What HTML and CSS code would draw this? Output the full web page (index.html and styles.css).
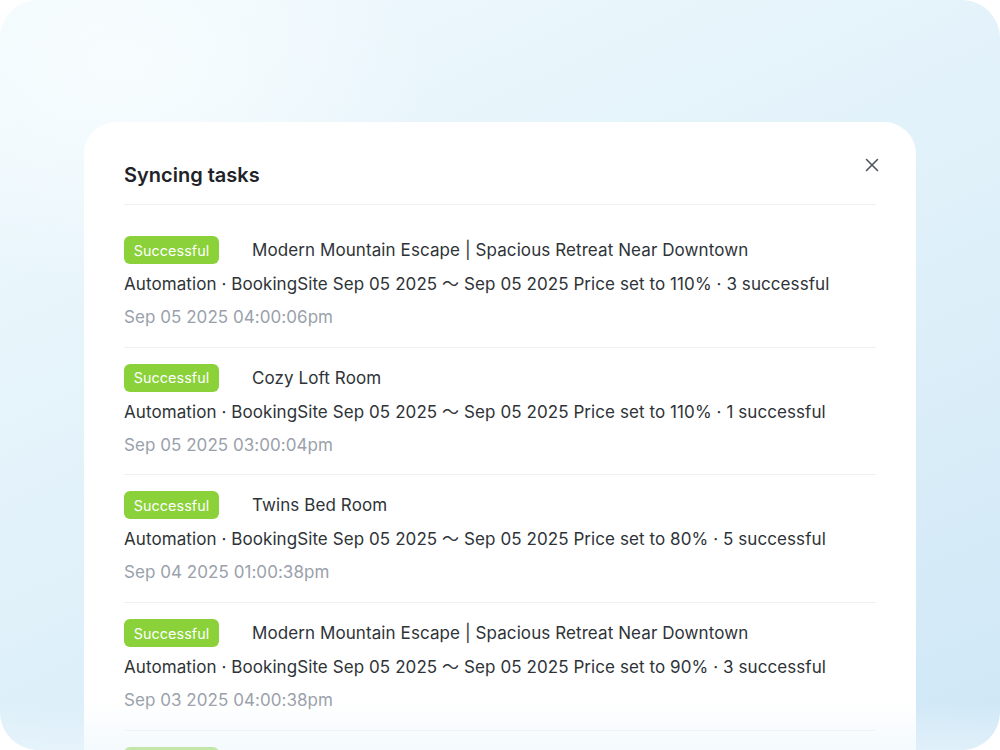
FILE: index.html
```html
<!DOCTYPE html>
<html>
<head>
<meta charset="utf-8">
<link rel="stylesheet" href="styles.css">
</head>
<body>
<div class="frame">
  <div class="card">
    <div class="header">
      <h1 class="title">Syncing tasks</h1>
      <button class="close" aria-label="Close">
        <svg width="14" height="14" viewBox="0 0 14 14"><path d="M1.5 1.5L12.5 12.5M12.5 1.5L1.5 12.5" stroke="#50555c" stroke-width="1.6" stroke-linecap="round"/></svg>
      </button>
    </div>
    <ul class="list">
      <li class="item">
        <div class="row"><span class="badge">Successful</span><span class="name">Modern Mountain Escape | Spacious Retreat Near Downtown</span></div>
        <div class="desc">Automation · BookingSite Sep 05 2025 ～ Sep 05 2025 Price set to 110% · 3 successful</div>
        <div class="time">Sep 05 2025 04:00:06pm</div>
      </li>
      <li class="item">
        <div class="row"><span class="badge">Successful</span><span class="name">Cozy Loft Room</span></div>
        <div class="desc">Automation · BookingSite Sep 05 2025 ～ Sep 05 2025 Price set to 110% · 1 successful</div>
        <div class="time">Sep 05 2025 03:00:04pm</div>
      </li>
      <li class="item">
        <div class="row"><span class="badge">Successful</span><span class="name">Twins Bed Room</span></div>
        <div class="desc">Automation · BookingSite Sep 05 2025 ～ Sep 05 2025 Price set to 80% · 5 successful</div>
        <div class="time">Sep 04 2025 01:00:38pm</div>
      </li>
      <li class="item">
        <div class="row"><span class="badge">Successful</span><span class="name">Modern Mountain Escape | Spacious Retreat Near Downtown</span></div>
        <div class="desc">Automation · BookingSite Sep 05 2025 ～ Sep 05 2025 Price set to 90% · 3 successful</div>
        <div class="time">Sep 03 2025 04:00:38pm</div>
      </li>
      <li class="item">
        <div class="row"><span class="badge"></span></div>
      </li>
    </ul>
  </div>
  <div class="fade"></div>
</div>
</body>
</html>
```
FILE: styles.css
```css
* { box-sizing: border-box; }
html, body { margin: 0; padding: 0; background: #ffffff; }
body {
  font-family: Inter, "Noto Sans", "Noto Sans CJK SC", sans-serif;
  width: 1000px;
  height: 750px;
  overflow: hidden;
}
.frame {
  position: relative;
  width: 1000px;
  height: 750px;
  border-radius: 38px;
  overflow: hidden;
  background:
    radial-gradient(ellipse 420px 300px at 12% 8%, rgba(248,253,255,0.95), rgba(248,253,255,0) 75%),
    linear-gradient(155deg, #f0f9fd 0%, #e2f2fa 45%, #cfe7f6 100%);
  padding-top: 122px;
}
.card {
  margin: 0 84px;
  background: #ffffff;
  border-radius: 32px;
  padding: 40px 40px 0;
  height: 700px;
}
.header {
  display: flex;
  align-items: center;
  justify-content: space-between;
  padding-bottom: 16px;
  border-bottom: 1px solid #eef1f4;
}
.title {
  margin: 0;
  font-size: 20px;
  line-height: 26px;
  font-weight: 600;
  color: #1f2329;
}
.close {
  border: 0;
  background: none;
  padding: 0;
  width: 14px;
  height: 14px;
  margin-top: -20px;
  margin-right: -3px;
  cursor: pointer;
  display: flex;
}
.list {
  list-style: none;
  margin: 15px 0 0;
  padding: 0;
}
.item {
  padding: 16px 0 17.7px;
  border-bottom: 1px solid #eef1f4;
}
.row {
  display: flex;
  align-items: center;
  height: 28px;
}
.badge {
  display: inline-flex;
  align-items: center;
  justify-content: center;
  width: 95px;
  height: 28px;
  border-radius: 6px;
  background: #8ad13a;
  color: #ffffff;
  font-size: 14.3px;
  letter-spacing: 0.1px;
}
.name {
  margin-left: 33px;
  font-size: 17px;
  letter-spacing: 0.09px;
  color: #2e3338;
}
.desc {
  margin-top: 8px;
  line-height: 24px;
  font-size: 17px;
  letter-spacing: 0.08px;
  color: #2e3338;
}
.time {
  margin-top: 9px;
  line-height: 24px;
  font-size: 17px;
  letter-spacing: 0.05px;
  color: #9aa1ab;
}
.fade {
  position: absolute;
  left: 0;
  right: 0;
  bottom: 0;
  height: 48px;
  background: linear-gradient(180deg, rgba(240,248,252,0) 0%, rgba(236,246,252,0.6) 100%);
  pointer-events: none;
}
```
